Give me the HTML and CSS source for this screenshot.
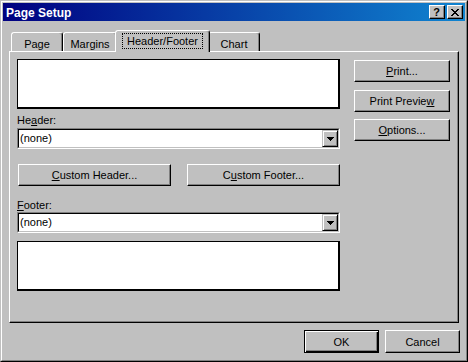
FILE: index.html
```html
<!DOCTYPE html>
<html>
<head>
<meta charset="utf-8">
<title>Page Setup</title>
<link rel="stylesheet" href="styles.css">
</head>
<body>
<div class="window">
  <div class="frame">
    <div class="titlebar">
      <span class="title">Page Setup</span>
      <div class="caption-btns">
        <button class="cbtn"><span class="help">?</span></button>
        <button class="cbtn">
          <svg width="8" height="7" viewBox="0 0 8 7" shape-rendering="crispEdges">
            <rect x="0" y="0" width="2" height="1"/><rect x="6" y="0" width="2" height="1"/>
            <rect x="1" y="1" width="2" height="1"/><rect x="5" y="1" width="2" height="1"/>
            <rect x="2" y="2" width="4" height="1"/>
            <rect x="3" y="3" width="2" height="1"/>
            <rect x="2" y="4" width="4" height="1"/>
            <rect x="1" y="5" width="2" height="1"/><rect x="5" y="5" width="2" height="1"/>
            <rect x="0" y="6" width="2" height="1"/><rect x="6" y="6" width="2" height="1"/>
          </svg>
        </button>
      </div>
    </div>
    <div class="body">
      <div class="tabs">
        <div class="tab tab-page">Page</div>
        <div class="tab tab-margins">Margins</div>
        <div class="tab tab-hf selected"><span class="focus">Header/Footer</span></div>
        <div class="tab tab-chart">Chart</div>
      </div>
      <div class="panel">
        <div class="leftcol">
          <div class="preview"></div>
          <div class="label label-header">He<u>a</u>der:</div>
          <div class="combo">
            <div class="combo-inner">
              <span class="combo-text">(none)</span>
              <span class="dd"><svg width="7" height="4" viewBox="0 0 7 4" shape-rendering="crispEdges"><path d="M0 0h7v1h-1v1h-1v1h-1v1h-1v-1h-1v-1h-1v-1h-1z"/></svg></span>
            </div>
          </div>
          <div class="custom-row">
            <button class="btn custom"><u>C</u>ustom Header...</button>
            <button class="btn custom">C<u>u</u>stom Footer...</button>
          </div>
          <div class="label label-footer"><u>F</u>ooter:</div>
          <div class="combo">
            <div class="combo-inner">
              <span class="combo-text">(none)</span>
              <span class="dd"><svg width="7" height="4" viewBox="0 0 7 4" shape-rendering="crispEdges"><path d="M0 0h7v1h-1v1h-1v1h-1v1h-1v-1h-1v-1h-1v-1h-1z"/></svg></span>
            </div>
          </div>
          <div class="preview preview-footer"></div>
        </div>
        <div class="rightcol">
          <button class="btn side side-print"><u>P</u>rint...</button>
          <button class="btn side side-preview">Print Previe<u>w</u></button>
          <button class="btn side side-options"><u>O</u>ptions...</button>
        </div>
      </div>
      <div class="footer">
        <button class="btn dlg default">OK</button>
        <button class="btn dlg">Cancel</button>
      </div>
    </div>
  </div>
</div>
</body>
</html>
```
FILE: styles.css
```css
html, body {
  margin: 0;
  padding: 0;
  background: #c0c0c0;
}

body {
  font-family: "Liberation Sans", Arial, sans-serif;
  font-size: 11px;
  line-height: 13px;
  color: #000;
}

u {
  text-decoration: underline;
  text-underline-offset: 1px;
}

.window {
  width: 468px;
  height: 362px;
  box-sizing: border-box;
  border: 1px solid;
  border-color: #c0c0c0 #000 #000 #c0c0c0;
  background: #c0c0c0;
}

.frame {
  height: 100%;
  box-sizing: border-box;
  border: 1px solid;
  border-color: #fff #808080 #808080 #fff;
  padding: 1px;
  display: flex;
  flex-direction: column;
}

.titlebar {
  height: 18px;
  flex: none;
  background: linear-gradient(90deg, #000080 0%, #1084d0 100%);
  display: flex;
  align-items: center;
  justify-content: space-between;
  padding: 0 2px 0 3px;
}

.title {
  color: #fff;
  font-weight: bold;
  font-size: 12px;
  line-height: 18px;
  padding-top: 1px;
}

.caption-btns {
  display: flex;
  gap: 2px;
}

.cbtn {
  appearance: none;
  margin: 0;
  padding: 0;
  width: 16px;
  height: 14px;
  box-sizing: border-box;
  border: 1px solid;
  border-color: #fff #000 #000 #fff;
  box-shadow: inset -1px -1px #808080;
  background: #c0c0c0;
  display: flex;
  align-items: center;
  justify-content: center;
  font: inherit;
  color: #000;
}

.cbtn svg {
  display: block;
  fill: #000;
  margin-right: 1px;
}

.help {
  font-weight: bold;
  font-size: 11px;
  line-height: 12px;
  margin-right: 1px;
}

.body {
  flex: 1;
  padding: 9px 5px 0 6px;
  display: flex;
  flex-direction: column;
}

.tabs {
  display: flex;
  align-items: flex-end;
  height: 22px;
  margin-bottom: -1px;
  padding-left: 2px;
  position: relative;
  z-index: 1;
}

.tab {
  height: 19px;
  margin-bottom: 1px;
  box-sizing: border-box;
  border: 1px solid;
  border-bottom: none;
  border-color: #fff #000 transparent #fff;
  border-radius: 3px 3px 0 0;
  box-shadow: inset -1px 0 #808080;
  background: #c0c0c0;
  text-align: center;
  padding-top: 5px;
  position: relative;
}

.tab-page { width: 52px; }
.tab-margins { width: 54px; }
.tab-hf { width: 95px; }
.tab-chart { width: 52px; }

.tab.selected {
  height: 22px;
  margin: 0 -2px;
  padding-top: 2px;
  z-index: 2;
}

.focus {
  display: inline-block;
  border: 1px dotted #000;
  padding: 1px 4px 0 4px;
  line-height: 13px;
}

.panel {
  width: 450px;
  height: 272px;
  box-sizing: border-box;
  border: 1px solid;
  border-color: #fff #000 #000 #fff;
  box-shadow: inset -1px -1px #808080;
  display: flex;
  gap: 14px;
  padding: 7px 8px 0 7px;
}

.leftcol {
  width: 323px;
  display: flex;
  flex-direction: column;
}

.rightcol {
  width: 96px;
  display: flex;
  flex-direction: column;
}

.preview {
  height: 50px;
  box-sizing: border-box;
  border: 1px solid #000;
  border-right-width: 2px;
  border-bottom-width: 2px;
  background: #fff;
}

.preview-footer {
  margin-top: 8px;
}

.label {
  height: 13px;
}

.label-header { margin-top: 5px; }
.label-footer { margin-top: 13px; }

.combo {
  height: 21px;
  box-sizing: border-box;
  border: 1px solid;
  border-color: #808080 #fff #fff #808080;
  margin-top: 1px;
}

.label-footer + .combo {
  margin-top: 0;
}

.combo-inner {
  height: 100%;
  box-sizing: border-box;
  border: 1px solid;
  border-color: #000 #c0c0c0 #c0c0c0 #000;
  background: #fff;
  display: flex;
}

.combo-text {
  flex: 1;
  padding-left: 1px;
  line-height: 17px;
}

.dd {
  width: 16px;
  height: 17px;
  box-sizing: border-box;
  border: 1px solid;
  border-color: #c0c0c0 #000 #000 #c0c0c0;
  box-shadow: inset 1px 1px #fff, inset -1px -1px #808080;
  background: #c0c0c0;
  display: flex;
  align-items: center;
  justify-content: center;
}

.dd svg {
  display: block;
  fill: #000;
}

.btn {
  appearance: none;
  margin: 0;
  box-sizing: border-box;
  border: 1px solid;
  border-color: #fff #000 #000 #fff;
  box-shadow: inset -1px -1px #808080;
  background: #c0c0c0;
  font: inherit;
  color: #000;
  padding: 1px 0 0 0;
  text-align: center;
}

.custom-row {
  display: flex;
  gap: 16px;
  padding-left: 1px;
  margin-top: 15px;
}

.custom {
  width: 153px;
  height: 22px;
}

.side {
  width: 96px;
  height: 22px;
}

.side-print { margin-top: 1px; }
.side-preview { margin-top: 8px; }
.side-options { margin-top: 7px; }

.footer {
  display: flex;
  justify-content: flex-end;
  gap: 6px;
  margin-top: 7px;
}

.dlg {
  width: 75px;
  height: 23px;
}

.btn.default {
  border: 1px solid #000;
  box-shadow: inset 1px 1px #fff, inset -1px -1px #000, inset -2px -2px #808080;
}
```
